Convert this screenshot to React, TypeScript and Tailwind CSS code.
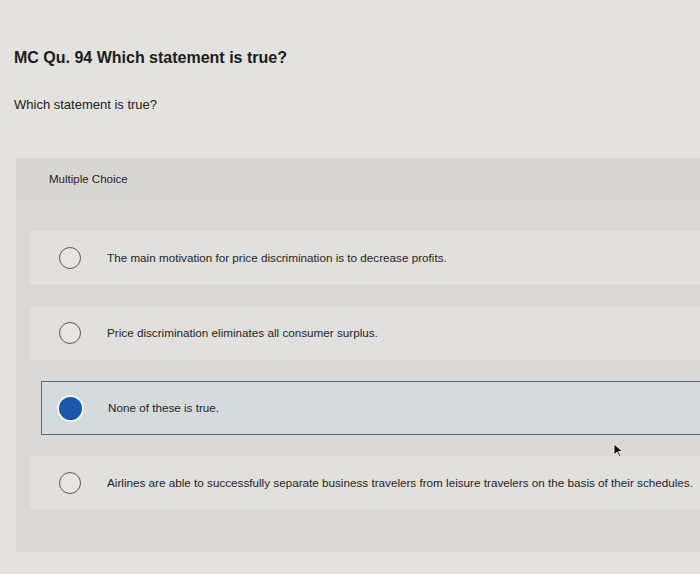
import React from "react";

const options = [
  "The main motivation for price discrimination is to decrease profits.",
  "Price discrimination eliminates all consumer surplus.",
  "None of these is true.",
  "Airlines are able to successfully separate business travelers from leisure travelers on the basis of their schedules.",
];

const selected = 2;

const Radio = ({ checked }: { checked: boolean }) =>
  checked ? (
    <span className="block w-[23px] h-[23px] shrink-0 rounded-full bg-[#1b58ad] ring-2 ring-[#f1f3f4]" />
  ) : (
    <span className="block w-[22px] h-[22px] shrink-0 rounded-full border-[1.5px] border-[#5a5a5a] bg-[#e6e5e1]" />
  );

const App = () => {
  return (
    <div
      className="relative w-[700px] h-[574px] overflow-hidden bg-[#e3e2de] text-[#222]"
      style={{ fontFamily: '"Liberation Sans", Arial, sans-serif' }}
    >
      {/* Question header */}
      <div className="pt-[46px] pl-[14px]">
        <h1 className="text-base leading-6 font-bold text-[#1c1c1c]">
          MC Qu. 94 Which statement is true?
        </h1>
        <p className="mt-[27px] text-[13px] leading-4 text-[#222]">Which statement is true?</p>
      </div>

      {/* Answer panel */}
      <div className="mt-[45px] ml-[16px] bg-[#d9d8d4] h-[394px]">
        <div className="h-[44px] flex items-center pl-[33px] bg-[#d7d6d2] text-[11.5px] text-[#222]">
          Multiple Choice
        </div>
        <div className="pt-[29px] flex flex-col gap-[21px]">
          {options.map((text, i) => {
            const isSel = i === selected;
            return (
              <div
                key={text}
                className={
                  isSel
                    ? "ml-[25px] h-[54px] flex items-center pl-[17px] gap-[26px] bg-[#d4dbdd] border border-[#66696b] border-r-0"
                    : "ml-[14px] h-[54px] flex items-center pl-[29px] gap-[26px] bg-[#e1e0dc]"
                }
              >
                <Radio checked={isSel} />
                <span className="text-[11.7px] text-[#1f1f1f] whitespace-nowrap">{text}</span>
              </div>
            );
          })}
        </div>
      </div>

      {/* Mouse cursor */}
      <svg
        className="absolute left-[613px] top-[443px]"
        width="11"
        height="15"
        viewBox="0 0 11 15"
      >
        <path d="M1 1 L1 12 L4 9 L6.5 14 L8 13.3 L5.6 8.5 L9.5 8.5 Z" fill="#111" stroke="#fff" strokeWidth="0.8" />
      </svg>
    </div>
  );
};

export default App;
